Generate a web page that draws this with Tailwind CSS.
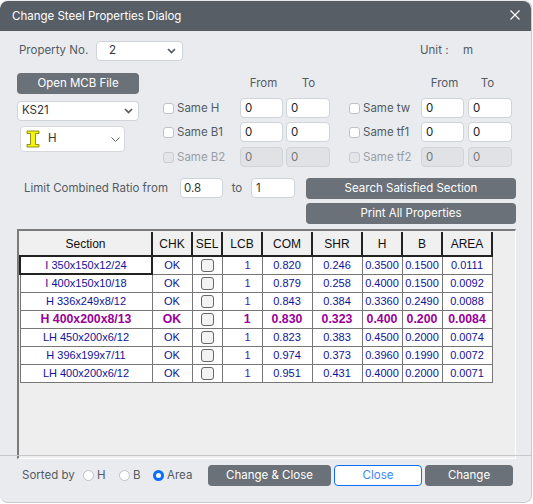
<!DOCTYPE html>
<html lang="en">
<head>
    <meta charset="UTF-8">
    <title>Change Steel Properties Dialog</title>
    <script src="https://cdn.jsdelivr.net/npm/@tailwindcss/browser@4"></script>
</head>
<body class="bg-white w-[533px] h-[504px] overflow-hidden font-['Inter',sans-serif] text-[11.5px] text-[#545b62]">

<div class="relative w-[532px] h-[503px] bg-[#e9ebef] rounded-lg border-r border-b border-[#c9cbcf] overflow-hidden flex flex-col">
    <!-- title bar -->
    <div class="h-[30px] mt-px shrink-0 bg-[#585e66] rounded-t-lg flex items-center justify-between pl-3 pr-[11px] text-white">
        <span class="pt-px">Change Steel Properties Dialog</span>
        <svg width="10" height="10" viewBox="0 0 10 10" class="mb-0.5"><path d="M0.5 0.5L9.5 9.5M9.5 0.5L0.5 9.5" stroke="white" stroke-width="1.2"/></svg>
    </div>

    <!-- property no -->
    <div class="h-[20px] mt-[10px] pl-[19px] flex items-center shrink-0">
        <span class="w-[77px]">Property No.</span>
        <div class="w-[87px] h-[20px] bg-white border border-[#ced4da] rounded flex items-center justify-between pl-[12px] pr-[6px] text-[#333]">
            <span>2</span>
            <svg width="9" height="6" viewBox="0 0 9 6"><path d="M1 1L4.5 4.5L8 1" fill="none" stroke="#555b62" stroke-width="1.7"/></svg>
        </div>
        <span class="ml-[237px] w-[43px]">Unit :</span>
        <span>m</span>
    </div>

    <!-- section picker + same ranges -->
    <div class="flex mt-[12px] pl-[17px] shrink-0">
        <div class="w-[122px] shrink-0">
            <div class="h-[21px] bg-[#6b7178] rounded text-white flex items-center justify-center">Open MCB File</div>
            <div class="h-[20px] mt-[7px] bg-white border border-[#ced4da] rounded-sm flex items-center justify-between pl-[4px] pr-[5px] text-[#333]">
                <span>KS21</span>
                <svg width="9" height="6" viewBox="0 0 9 6"><path d="M1 1L4.5 4.5L8 1" fill="none" stroke="#555b62" stroke-width="1.7"/></svg>
            </div>
            <div class="h-[26px] w-[105px] ml-[3px] mt-[5px] bg-white border border-[#d5d8dc] rounded-sm flex items-center pl-[5px] pr-[4px] text-[#333]">
                <svg width="14" height="18" viewBox="0 0 14 18" class="shrink-0"><path d="M1 1H13V3.5H9.5V14.5H13V17H1V14.5H4.5V3.5H1Z" fill="#f5f50a" stroke="#77770a" stroke-width="0.8"/></svg>
                <span class="ml-[8px]">H</span>
                <svg width="9" height="5" viewBox="0 0 9 5" class="ml-auto"><path d="M0.5 0.5L4.5 4.5L8.5 0.5" fill="none" stroke="#555b62" stroke-width="1"/></svg>
            </div>
        </div>

        <div class="ml-[24px] w-[167px] shrink-0">
            <div class="flex h-[21px] pl-[77px] items-center"><span class="w-[47px] text-center">From</span><span class="w-[43px] text-center">To</span></div>
            <div class="flex items-center h-[20px] mt-[4px]">
                <span class="w-[11px] h-[11px] bg-white border border-[#bdc2c8] rounded-[3px] mr-[3px] shrink-0"></span>
                <span class="w-[63px] pt-px">Same H</span>
                <div class="w-[43px] h-[20px] bg-white border border-[#ced4da] rounded-sm pl-[4px] leading-[18px] text-[#222]">0</div>
                <div class="w-[44px] h-[20px] ml-[3px] bg-white border border-[#ced4da] rounded-sm pl-[4px] leading-[18px] text-[#222]">0</div>
            </div>
            <div class="flex items-center h-[20px] mt-[4px]">
                <span class="w-[11px] h-[11px] bg-white border border-[#bdc2c8] rounded-[3px] mr-[3px] shrink-0"></span>
                <span class="w-[63px] pt-px">Same B1</span>
                <div class="w-[43px] h-[20px] bg-white border border-[#ced4da] rounded-sm pl-[4px] leading-[18px] text-[#222]">0</div>
                <div class="w-[44px] h-[20px] ml-[3px] bg-white border border-[#ced4da] rounded-sm pl-[4px] leading-[18px] text-[#222]">0</div>
            </div>
            <div class="flex items-center h-[20px] mt-[5px] text-[#9a9ea3]">
                <span class="w-[11px] h-[11px] bg-[#e3e5e8] border border-[#c8ccd0] rounded-[3px] mr-[3px] shrink-0"></span>
                <span class="w-[63px] pt-px">Same B2</span>
                <div class="w-[43px] h-[20px] bg-[#e0e2e5] border border-[#ced4da] rounded-sm pl-[4px] leading-[18px] text-[#777]">0</div>
                <div class="w-[44px] h-[20px] ml-[3px] bg-[#e0e2e5] border border-[#ced4da] rounded-sm pl-[4px] leading-[18px] text-[#777]">0</div>
            </div>
        </div>

        <div class="ml-[19px] w-[163px] shrink-0">
            <div class="flex h-[21px] pl-[72px] items-center"><span class="w-[47px] text-center">From</span><span class="w-[39px] text-center">To</span></div>
            <div class="flex items-center h-[20px] mt-[4px]">
                <span class="w-[11px] h-[11px] bg-white border border-[#bdc2c8] rounded-[3px] mr-[3px] shrink-0"></span>
                <span class="w-[58px] pt-px">Same tw</span>
                <div class="w-[43px] h-[20px] bg-white border border-[#ced4da] rounded-sm pl-[4px] leading-[18px] text-[#222]">0</div>
                <div class="w-[44px] h-[20px] ml-[4px] bg-white border border-[#ced4da] rounded-sm pl-[4px] leading-[18px] text-[#222]">0</div>
            </div>
            <div class="flex items-center h-[20px] mt-[4px]">
                <span class="w-[11px] h-[11px] bg-white border border-[#bdc2c8] rounded-[3px] mr-[3px] shrink-0"></span>
                <span class="w-[58px] pt-px">Same tf1</span>
                <div class="w-[43px] h-[20px] bg-white border border-[#ced4da] rounded-sm pl-[4px] leading-[18px] text-[#222]">0</div>
                <div class="w-[44px] h-[20px] ml-[4px] bg-white border border-[#ced4da] rounded-sm pl-[4px] leading-[18px] text-[#222]">0</div>
            </div>
            <div class="flex items-center h-[20px] mt-[5px] text-[#9a9ea3]">
                <span class="w-[11px] h-[11px] bg-[#e3e5e8] border border-[#c8ccd0] rounded-[3px] mr-[3px] shrink-0"></span>
                <span class="w-[58px] pt-px">Same tf2</span>
                <div class="w-[43px] h-[20px] bg-[#e0e2e5] border border-[#ced4da] rounded-sm pl-[4px] leading-[18px] text-[#777]">0</div>
                <div class="w-[44px] h-[20px] ml-[4px] bg-[#e0e2e5] border border-[#ced4da] rounded-sm pl-[4px] leading-[18px] text-[#777]">0</div>
            </div>
        </div>
    </div>

    <!-- limit ratio + action buttons -->
    <div class="flex mt-[11px] pl-[24px] shrink-0">
        <div class="flex items-center h-[20px]">
            <span class="w-[156px] pt-px">Limit Combined Ratio from</span>
            <div class="w-[43px] h-[20px] bg-white border border-[#ced4da] rounded-sm pl-[3px] leading-[18px] text-[#333]">0.8</div>
            <span class="w-[28px] text-center pt-px">to</span>
            <div class="w-[44px] h-[20px] bg-white border border-[#ced4da] rounded-sm pl-[4px] leading-[18px] text-[#333]">1</div>
        </div>
        <div class="ml-[11px] w-[210px] flex flex-col gap-[4px]">
            <div class="h-[21px] pt-px bg-[#6b7178] rounded text-white flex items-center justify-center">Search Satisfied Section</div>
            <div class="h-[21px] bg-[#6b7178] rounded text-white flex items-center justify-center">Print All Properties</div>
        </div>
    </div>

    <!-- results table -->
    <div class="ml-[17px] mt-[5px] w-[499px] h-[230px] shrink-0 bg-[#eeeeef] border-t-2 border-l-2 border-[#7b7b7b] border-r border-r-white border-b border-b-white pt-[1px] font-['Liberation_Sans',sans-serif] text-[11px] leading-[16px]">
        <table class="border-collapse table-fixed w-[472px] text-[#111199]">
            <colgroup>
                <col class="w-[132px]"><col class="w-[40px]"><col class="w-[30px]"><col class="w-[40px]"><col class="w-[50px]"><col class="w-[50px]"><col class="w-[40px]"><col class="w-[40px]"><col class="w-[50px]">
            </colgroup>
            <thead>
                <tr class="h-[24px] text-[#111] text-[12px] bg-[#f0f0f0]">
                    <th class="font-normal border-r-2 border-b-2 border-[#222]">Section</th>
                    <th class="font-normal border-r-2 border-b-2 border-[#222]">CHK</th>
                    <th class="font-normal border-r-2 border-b-2 border-[#222]">SEL</th>
                    <th class="font-normal border-r-2 border-b-2 border-[#222]">LCB</th>
                    <th class="font-normal border-r-2 border-b-2 border-[#222]">COM</th>
                    <th class="font-normal border-r-2 border-b-2 border-[#222]">SHR</th>
                    <th class="font-normal border-r-2 border-b-2 border-[#222]">H</th>
                    <th class="font-normal border-r-2 border-b-2 border-[#222]">B</th>
                    <th class="font-normal border-r-2 border-b-2 border-[#222]">AREA</th>
                </tr>
            </thead>
            <tbody class="bg-white text-center">
                <tr class="h-[18px]">
                    <td class="border-2 border-[#222]">I 350x150x12/24</td><td class="border border-[#777]">OK</td>
                    <td class="border border-[#777]"><span class="block w-[13px] h-[13px] mx-auto rounded-[3px] border border-[#666] bg-[#f3f3f3]"></span></td>
                    <td class="border border-[#777] text-right pr-[11px] text-[#5511aa]">1</td><td class="border border-[#777]">0.820</td><td class="border border-[#777]">0.246</td><td class="border border-[#777]">0.3500</td><td class="border border-[#777]">0.1500</td><td class="border border-[#777]">0.0111</td>
                </tr>
                <tr class="h-[18px]">
                    <td class="border border-[#777]">I 400x150x10/18</td><td class="border border-[#777]">OK</td>
                    <td class="border border-[#777]"><span class="block w-[13px] h-[13px] mx-auto rounded-[3px] border border-[#666] bg-[#f3f3f3]"></span></td>
                    <td class="border border-[#777] text-right pr-[11px] text-[#5511aa]">1</td><td class="border border-[#777]">0.879</td><td class="border border-[#777]">0.258</td><td class="border border-[#777]">0.4000</td><td class="border border-[#777]">0.1500</td><td class="border border-[#777]">0.0092</td>
                </tr>
                <tr class="h-[18px]">
                    <td class="border border-[#777]">H 336x249x8/12</td><td class="border border-[#777]">OK</td>
                    <td class="border border-[#777]"><span class="block w-[13px] h-[13px] mx-auto rounded-[3px] border border-[#666] bg-[#f3f3f3]"></span></td>
                    <td class="border border-[#777] text-right pr-[11px] text-[#5511aa]">1</td><td class="border border-[#777]">0.843</td><td class="border border-[#777]">0.384</td><td class="border border-[#777]">0.3360</td><td class="border border-[#777]">0.2490</td><td class="border border-[#777]">0.0088</td>
                </tr>
                <tr class="h-[18px] font-bold text-[#990099] text-[12.3px]">
                    <td class="border border-[#777]">H 400x200x8/13</td><td class="border border-[#777]">OK</td>
                    <td class="border border-[#777]"><span class="block w-[13px] h-[13px] mx-auto rounded-[3px] border border-[#666] bg-[#f3f3f3]"></span></td>
                    <td class="border border-[#777] text-right pr-[11px]">1</td><td class="border border-[#777]">0.830</td><td class="border border-[#777]">0.323</td><td class="border border-[#777]">0.400</td><td class="border border-[#777]">0.200</td><td class="border border-[#777]">0.0084</td>
                </tr>
                <tr class="h-[18px]">
                    <td class="border border-[#777]">LH 450x200x6/12</td><td class="border border-[#777]">OK</td>
                    <td class="border border-[#777]"><span class="block w-[13px] h-[13px] mx-auto rounded-[3px] border border-[#666] bg-[#f3f3f3]"></span></td>
                    <td class="border border-[#777] text-right pr-[11px] text-[#5511aa]">1</td><td class="border border-[#777]">0.823</td><td class="border border-[#777]">0.383</td><td class="border border-[#777]">0.4500</td><td class="border border-[#777]">0.2000</td><td class="border border-[#777]">0.0074</td>
                </tr>
                <tr class="h-[18px]">
                    <td class="border border-[#777]">H 396x199x7/11</td><td class="border border-[#777]">OK</td>
                    <td class="border border-[#777]"><span class="block w-[13px] h-[13px] mx-auto rounded-[3px] border border-[#666] bg-[#f3f3f3]"></span></td>
                    <td class="border border-[#777] text-right pr-[11px] text-[#5511aa]">1</td><td class="border border-[#777]">0.974</td><td class="border border-[#777]">0.373</td><td class="border border-[#777]">0.3960</td><td class="border border-[#777]">0.1990</td><td class="border border-[#777]">0.0072</td>
                </tr>
                <tr class="h-[18px]">
                    <td class="border border-[#777]">LH 400x200x6/12</td><td class="border border-[#777]">OK</td>
                    <td class="border border-[#777]"><span class="block w-[13px] h-[13px] mx-auto rounded-[3px] border border-[#666] bg-[#f3f3f3]"></span></td>
                    <td class="border border-[#777] text-right pr-[11px] text-[#5511aa]">1</td><td class="border border-[#777]">0.951</td><td class="border border-[#777]">0.431</td><td class="border border-[#777]">0.4000</td><td class="border border-[#777]">0.2000</td><td class="border border-[#777]">0.0071</td>
                </tr>
            </tbody>
        </table>
    </div>

    <!-- hairline that lies over the foot of the table frame -->
    <div class="absolute left-0 right-0 top-[455px] h-px bg-[#c6c8cb]"></div>

    <!-- footer -->
    <div class="flex items-center h-[33px] pl-[22px] shrink-0">
        <span class="w-[61px]">Sorted by</span>
        <span class="w-[11px] h-[11px] bg-white border border-[#bdc2c8] rounded-full"></span>
        <span class="ml-[3px] w-[22px]">H</span>
        <span class="w-[11px] h-[11px] bg-white border border-[#bdc2c8] rounded-full"></span>
        <span class="ml-[3px] w-[20px]">B</span>
        <span class="w-[11px] h-[11px] bg-white border-[3.5px] border-[#0d6efd] rounded-full"></span>
        <span class="ml-[3px] w-[41px]">Area</span>
        <div class="w-[123px] h-[21px] bg-[#6b7178] rounded text-white flex items-center justify-center">Change &amp; Close</div>
        <div class="ml-[3px] w-[88px] h-[21px] bg-white border border-[#0d6efd] rounded text-[#3a86ff] flex items-center justify-center">Close</div>
        <div class="ml-[3px] w-[88px] h-[21px] bg-[#6b7178] rounded text-white flex items-center justify-center">Change</div>
    </div>
</div>

</body>
</html>
